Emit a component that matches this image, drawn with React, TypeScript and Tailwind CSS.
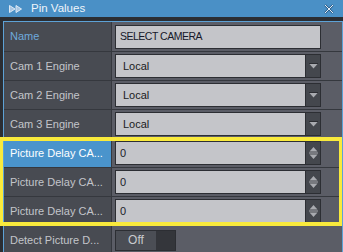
import React from 'react'

type Row = {
  label: string
  kind: 'text' | 'select' | 'spin' | 'toggle'
  value: string
  labelClass?: string
  cellClass?: string
  tall?: boolean
}

const rows: Row[] = [
  { label: 'Name', kind: 'text', value: 'SELECT CAMERA', labelClass: 'text-[#6eaadd]', tall: true },
  { label: 'Cam 1 Engine', kind: 'select', value: 'Local' },
  { label: 'Cam 2 Engine', kind: 'select', value: 'Local' },
  { label: 'Cam 3 Engine', kind: 'select', value: 'Local' },
  { label: 'Picture Delay CA...', kind: 'spin', value: '0', labelClass: 'text-white', cellClass: 'bg-[#4a94cc]' },
  { label: 'Picture Delay CA...', kind: 'spin', value: '0' },
  { label: 'Picture Delay CA...', kind: 'spin', value: '0' },
  { label: 'Detect Picture D...', kind: 'toggle', value: 'Off' },
]

function DownArrow() {
  return (
    <svg width="9" height="6" viewBox="0 0 9 6">
      <line x1="0" y1="0.5" x2="9" y2="0.5" stroke="#2c2e33" strokeWidth="1" />
      <polygon points="0.5,1 8.5,1 4.5,5.5" fill="#a9abb0" />
    </svg>
  )
}

function Spinner() {
  return (
    <svg width="9" height="14" viewBox="0 0 9 14">
      <polygon points="0.5,5.5 4.5,1 8.5,5.5" fill="#a9abb0" />
      <line x1="0" y1="7" x2="9" y2="7" stroke="#a9abb0" strokeWidth="1" />
      <polygon points="0.5,8.5 8.5,8.5 4.5,13" fill="#a9abb0" />
    </svg>
  )
}

function Value({ row }: { row: Row }) {
  if (row.kind === 'toggle') {
    return (
      <div className="flex h-[21px] w-[61px] border border-[#2c2e33]">
        <div className="flex w-[40px] items-center justify-center bg-[#4b4e55] text-[12px] text-[#c8cacd]">
          {row.value}
        </div>
        <div className="flex-1 bg-[#34363b]" />
      </div>
    )
  }
  return (
    <div className="flex h-[24px] w-[206px] border border-[#2c2e33]">
      <div
        className={
          row.kind === 'text'
            ? 'flex flex-1 items-center bg-[#c4c5c9] pl-[4px] text-[10.5px] tracking-[-0.5px] text-[#16182a]'
            : row.kind === 'select'
              ? 'flex flex-1 items-center bg-[#c4c5c9] pl-[7px] text-[11px] text-[#1b1c22]'
              : 'flex flex-1 items-center bg-[#c4c5c9] pl-[4px] text-[11px] text-[#1b1c2a]'
        }
      >
        {row.value}
      </div>
      {row.kind !== 'text' && (
        <div className="flex w-[15px] items-center justify-center border-l border-[#2c2e33] bg-[#44474d]">
          {row.kind === 'select' ? <DownArrow /> : <Spinner />}
        </div>
      )}
    </div>
  )
}

export default function App() {
  return (
    <div className="relative h-[252px] w-[343px] overflow-hidden bg-[#2b2e33] font-['Liberation_Sans',Arial,sans-serif]">
      {/* Title bar */}
      <div className="flex h-[17px] items-center bg-[#4a90c6] pl-[9px] pr-[9px]">
        <svg width="14" height="8" viewBox="0 0 14 8">
          <polygon points="0.5,0.5 6,4 0.5,7.5" fill="#a9c6e2" stroke="#dde9f5" strokeWidth="1" />
          <polygon points="7,0.5 12.5,4 7,7.5" fill="#a9c6e2" stroke="#dde9f5" strokeWidth="1" />
        </svg>
        <span className="ml-[8px] text-[11.5px] text-[#eef4fa]">Pin Values</span>
        <svg className="ml-auto" width="10" height="10" viewBox="0 0 10 10">
          <path d="M1 1 L9 9 M9 1 L1 9" stroke="#2f5f8a" strokeWidth="2.2" />
          <path d="M1 1 L9 9 M9 1 L1 9" stroke="#e4eef7" strokeWidth="1" />
        </svg>
      </div>

      {/* Panel */}
      <div className="mt-[4px] ml-[3px] border-x border-t border-[#5da2d6]">
        {rows.map((row, i) => (
          <div
            key={i}
            className={`flex border-b border-[#35383e] ${row.tall ? 'h-[30px]' : 'h-[29px]'}`}
          >
            <div
              className={`flex w-[108px] shrink-0 items-center border-r border-[#35383e] pl-[6px] text-[11px] ${
                row.cellClass ?? 'bg-[#484b52]'
              } ${row.labelClass ?? 'text-[#c3c5ca]'}`}
            >
              <span className="whitespace-nowrap">{row.label}</span>
            </div>
            <div className="flex flex-1 items-center bg-[#5b5d66] pl-[3px]">
              <Value row={row} />
            </div>
          </div>
        ))}
      </div>

      {/* Highlight annotation */}
      <div className="pointer-events-none absolute top-[137px] left-0 h-[89px] w-[342px] border-x-[3px] border-y-4 border-[#f9ea3c]" />
    </div>
  )
}
